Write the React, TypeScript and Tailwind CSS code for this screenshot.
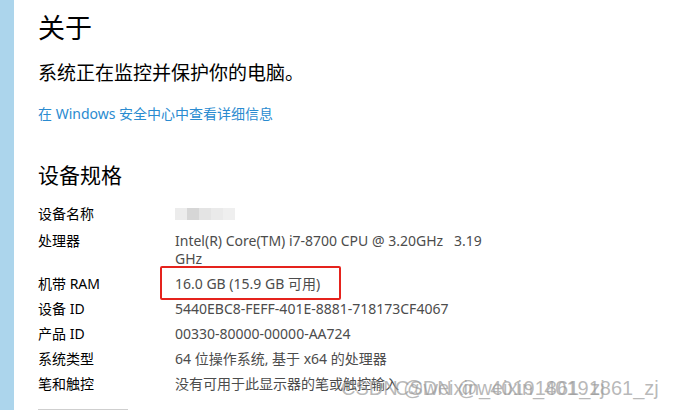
const rows: { label: string; value: React.ReactNode; key: string }[] = [
  { key: "name", label: "设备名称", value: null },
  {
    key: "cpu",
    label: "处理器",
    value: (
      <>
        Intel(R) Core(TM) i7-8700 CPU @ 3.20GHz&nbsp;&nbsp;&nbsp;3.19
        <br />
        GHz
      </>
    ),
  },
  { key: "ram", label: "机带 RAM", value: "16.0 GB (15.9 GB 可用)" },
  { key: "dev", label: "设备 ID", value: "5440EBC8-FEFF-401E-8881-718173CF4067" },
  { key: "prod", label: "产品 ID", value: "00330-80000-00000-AA724" },
  { key: "type", label: "系统类型", value: "64 位操作系统, 基于 x64 的处理器" },
  { key: "pen", label: "笔和触控", value: "没有可用于此显示器的笔或触控输入" },
];

function BlurredName() {
  // pixelated placeholder where the device name was hidden
  return (
    <div className="flex h-[18px] items-center blur-[0.6px]">
      <div className="h-[12px] w-[12px] bg-[#ececec]" />
      <div className="h-[12px] w-[12px] bg-[#d6d6d6]" />
      <div className="h-[12px] w-[12px] bg-[#e4e4e4]" />
      <div className="h-[12px] w-[12px] bg-[#eaeaea]" />
      <div className="h-[12px] w-[12px] bg-[#efefef]" />
    </div>
  );
}

export default function App() {
  return (
    <div className="relative flex h-[410px] w-[678px] overflow-hidden bg-white font-['Noto_Sans','Noto_Sans_CJK_SC',sans-serif]">
      <div className="w-[14px] shrink-0 bg-[#acd5ec]" />
      <div className="flex flex-col pl-[24px]">
        <h1 className="mt-[11px] text-[27px] leading-[34px] text-black">关于</h1>
        <p className="mt-[15px] text-[19px] leading-[26px] text-black">系统正在监控并保护你的电脑。</p>
        <a className="mt-[19px] text-[14px] leading-[18px] text-[#2a8bd0]">在 Windows 安全中心中查看详细信息</a>

        <h2 className="mt-[38px] text-[21px] leading-[28px] text-black">设备规格</h2>

        <div className="mt-[16px] flex flex-col gap-[7px] text-[14px] leading-[18px]">
          {rows.map((r) => (
            <div key={r.key} className={r.key === "name" ? "mb-[2px] flex" : "flex"}>
              <div className="w-[137px] shrink-0 text-black">{r.label}</div>
              <div className="relative text-[#4c4c4c]">
                {r.key === "name" ? <BlurredName /> : r.value}
                {r.key === "ram" && (
                  <div className="absolute -left-[15px] -top-[9px] h-[34px] w-[181px] rounded-[2px] border-2 border-[#e5231d]" />
                )}
              </div>
            </div>
          ))}
        </div>

        <div className="mt-[16px] h-[2px] w-[90px] bg-[#cfcfcf]" />
      </div>

      {/* watermark, stamped twice */}
      <div className="pointer-events-none absolute left-[341px] top-[375px] whitespace-nowrap text-[20px] leading-[26px] text-[#9a9a9a]/70 font-['Liberation_Sans',sans-serif]">
        CSDN @weixin_40191861_zj
      </div>
      <div className="pointer-events-none absolute left-[395px] top-[375px] whitespace-nowrap text-[20px] leading-[26px] text-[#9a9a9a]/70 font-['Liberation_Sans',sans-serif]">
        CSDN @weixin_40191861_zj
      </div>
    </div>
  );
}
